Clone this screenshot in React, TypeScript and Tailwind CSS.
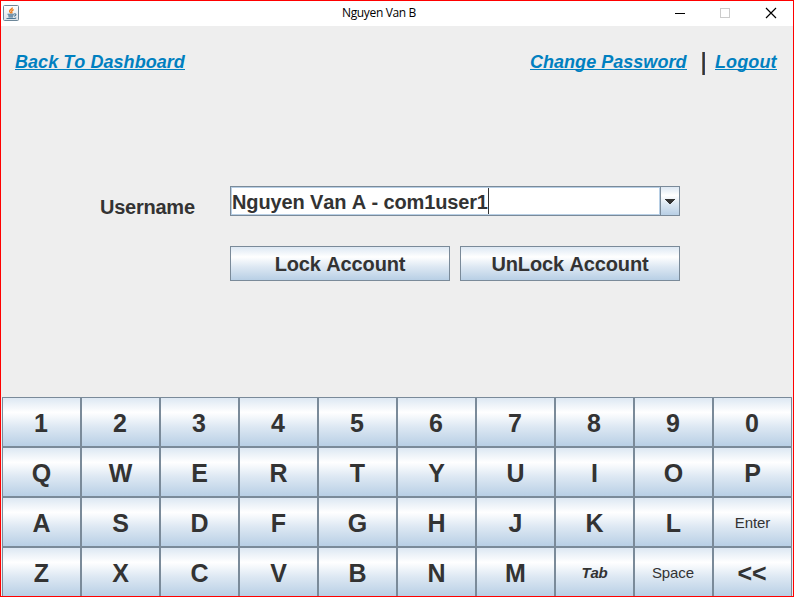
import React from "react";

type Key = { label: string; style?: string };

const digit = "text-[25px] font-bold pt-[3px] pr-px";
const letter = "text-[25px] font-bold pt-[3px]";
const rows: Key[][] = [
  [..."1234567890"].map((label) => ({ label, style: digit })),
  [..."QWERTYUIOP"].map((label) => ({ label })),
  [...[..."ASDFGHJKL"].map((label) => ({ label })), { label: "Enter", style: "text-[15px] tracking-[-0.1px] pt-[2px]" }],
  [
    ...[..."ZXCVBNM"].map((label) => ({ label })),
    { label: "Tab", style: "text-[15px] font-bold italic tracking-[-0.2px] pt-[2px]" },
    { label: "Space", style: "text-[15px] tracking-[-0.1px] pt-[2px] pr-px" },
    { label: "<<", style: digit },
  ],
];

const metal =
  "border border-[#7a8a99] bg-[linear-gradient(to_bottom,#dde8f3_0%,#ffffff_30%,#dde8f3_60%,#b8cfe5_100%)]";

const link = "h-[21px] text-[18px] leading-[21px] font-bold italic text-[#0080c0] whitespace-nowrap";

function Link({ children, className = "" }: { children: string; className?: string }) {
  return (
    <a className={`${link} ${className} bg-[linear-gradient(#0080c0,#0080c0)] bg-[length:100%_1px] bg-[position:0_17px] bg-no-repeat`}>
      {children}
    </a>
  );
}

function JavaIcon() {
  return (
    <svg className="ml-[2px] mt-[4px] h-4 w-4 shrink-0" viewBox="0 0 16 16" fill="none">
      <defs>
        <linearGradient id="tile" x1="0" y1="0" x2="0" y2="1">
          <stop offset="0" stopColor="#ffffff" />
          <stop offset="1" stopColor="#dce3e8" />
        </linearGradient>
      </defs>
      <rect x="0.5" y="0.5" width="15" height="15" rx="1" fill="url(#tile)" stroke="#6d8799" />
      <path d="M9.400 2.500C9.700 4.200 6.200 4.600 6.600 6.300C6.800 7.200 7.800 7.500 7.900 8.400M10.700 4.700C9 5.300 8.200 6 8.900 7C9.200 7.600 8.800 8 8.600 8.400" stroke="#ee7d1b" strokeWidth="1.300" />
      <path d="M4.500 9.200H11M5.200 10.800H10.500M11.200 8.900C13.700 8.500 13.400 10.700 11 11.200M5.500 12H10M3.500 13.500H11.500C12.400 13.500 12.900 13.200 13 12.700" stroke="#4d7896" strokeWidth="1.100" />
    </svg>
  );
}

export default function App() {
  return (
    <div className="flex h-[597px] w-[794px] flex-col overflow-hidden border border-[#ff0000] bg-[#eeeeee] font-['Liberation_Sans',Arial,sans-serif] text-[#333333] [font-kerning:none]">
      <header className="flex h-[25px] shrink-0 bg-white">
        <JavaIcon />
        <div className="ml-[323px] w-[76px] whitespace-nowrap font-['Open_Sans','Noto_Sans',sans-serif] text-[12px] leading-[24px] tracking-[-0.35px] text-black">
          Nguyen Van B
        </div>
        <svg className="ml-auto h-[25px] w-[128px]" viewBox="0 0 128 25" fill="none" shapeRendering="crispEdges">
          <path d="M10 12.500H20" stroke="#000" />
          <rect x="55.500" y="7.500" width="9" height="9" stroke="#cccccc" />
          <path d="M101 7L111 17M111 7L101 17" stroke="#000" shapeRendering="auto" strokeWidth="1.200" />
        </svg>
      </header>

      <nav className="flex h-[72px] shrink-0 items-start pl-[14px] pr-[16px] pt-[26px]">
        <Link className="w-[170px] tracking-[0.05px]">Back To Dashboard</Link>
        <Link className="ml-auto w-[157px] tracking-[0.03px]">Change Password</Link>
        <span className="ml-[15px] h-[23px] w-[3px] border-x border-l-[#8c6a4a] border-r-[#2f4a78] bg-[#333333]" />
        <Link className="ml-[10px] w-[62px] tracking-[0.1px]">Logout</Link>
      </nav>

      <main className="flex h-[299px] shrink-0 flex-col pl-[99px] pt-[88px] text-[20px] font-bold">
        <div className="flex h-[30px]">
          <label className="w-[130px] pt-[10px] leading-[23px] tracking-[-0.24px]">Username</label>
          <div className="flex w-[450px] border border-[#7a8a99]">
            <div className="flex flex-1 border border-[#b8cfe5] bg-white leading-[29px]">
              <span className="w-[256px] whitespace-nowrap tracking-[-0.13px]">Nguyen Van A - com1user1</span>
              <span className="h-[26px] w-px bg-[#333333]" />
            </div>
            <button className="flex w-[19px] items-center justify-center border-l border-[#7a8a99] bg-[linear-gradient(to_bottom,#dde8f3_0%,#ffffff_30%,#dde8f3_60%,#b8cfe5_100%)]">
              <svg className="h-[5px] w-[10px]" viewBox="0 0 10 5" shapeRendering="crispEdges">
                <path d="M0 0H10V1H9V2H8V3H7V4H6V5H4V4H3V3H2V2H1V1H0Z" fill="#333333" />
              </svg>
            </button>
          </div>
        </div>
        <div className="ml-[130px] mt-[30px] flex gap-[10px] tracking-[-0.13px]">
          <button className={`${metal} h-[35px] w-[220px] pt-px leading-[33px]`}>Lock Account</button>
          <button className={`${metal} h-[35px] w-[220px] pt-px leading-[33px]`}>UnLock Account</button>
        </div>
      </main>

      <section className="ml-px grid w-[790px] shrink-0 grid-cols-10">
        {rows.flat().map((key) => (
          <button key={key.label} className={`${metal} ${key.style ?? letter} flex h-[50px] items-center justify-center`}>
            {key.label}
          </button>
        ))}
      </section>
    </div>
  );
}
